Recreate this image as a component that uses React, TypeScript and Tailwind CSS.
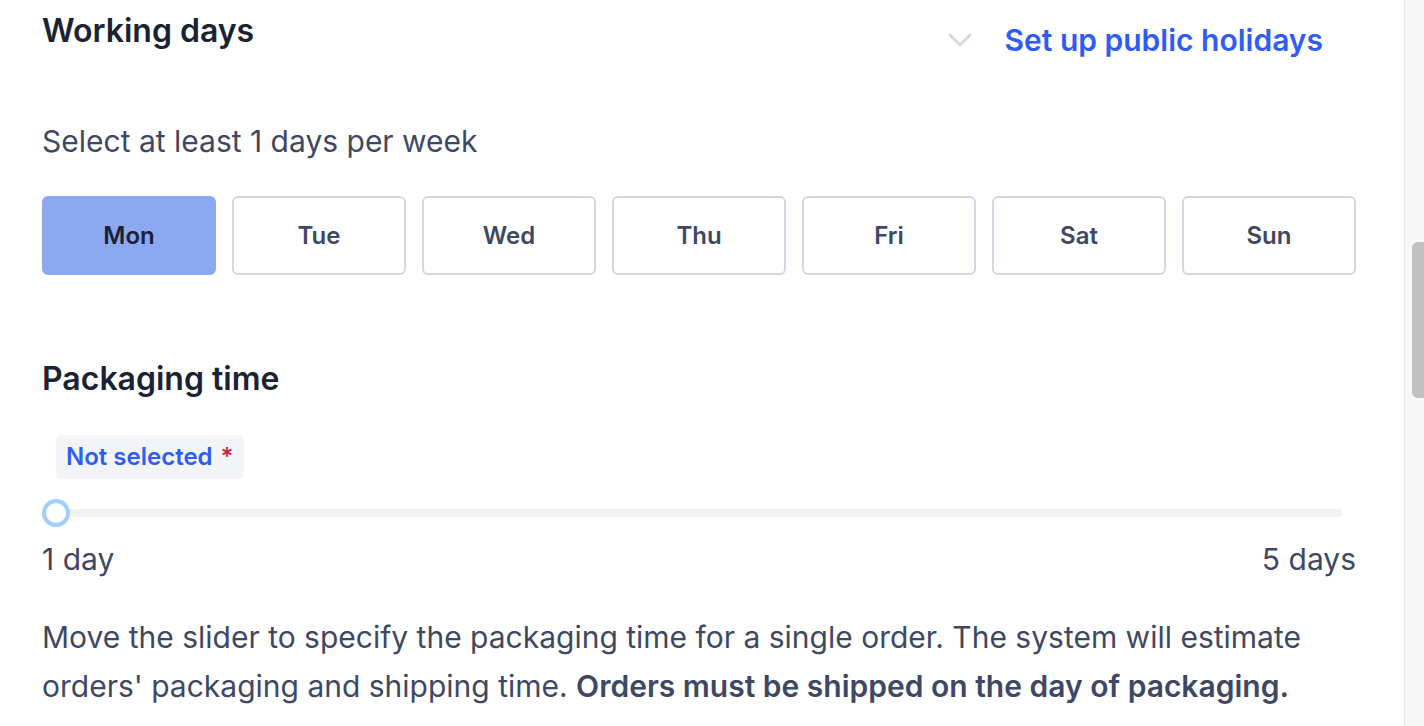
import React, { useState } from 'react';

const DAYS = ['Mon', 'Tue', 'Wed', 'Thu', 'Fri', 'Sat', 'Sun'];

export default function App() {
    const [selected, setSelected] = useState<string[]>(['Mon']);

    const toggle = (d: string) => {
        setSelected((s) => (s.includes(d) ? s.filter((x) => x !== d) : [...s, d]));
    };

    return (
        <div className="flex h-[726px] w-[1424px] overflow-hidden bg-white font-['Inter',sans-serif] text-[#3f4863]">
            <div className="flex-1 pl-[42px] pr-[48px]">
                {/* header */}
                <div className="flex items-start justify-between pt-[12px]">
                    <h2 className="text-[32px] font-semibold leading-[38px] text-[#1b2233]">Working days</h2>
                    <div className="mr-[33px] mt-[10px] flex items-center gap-[32px]">
                        <svg width="24" height="14" viewBox="0 0 24 14" fill="none">
                            <path d="M2 2l10 10L22 2" stroke="#d2d6e0" strokeWidth="2.5" strokeLinecap="round" strokeLinejoin="round" />
                        </svg>
                        <a className="text-[30px] font-semibold leading-[36px] text-[#2f5cf5]" href="#">Set up public holidays</a>
                    </div>
                </div>

                <p className="mt-[64px] text-[30px] leading-[38px]">Select at least 1 days per week</p>

                {/* days */}
                <div className="mt-[36px] grid grid-cols-7 gap-4">
                    {DAYS.map((d) => {
                        const on = selected.includes(d);
                        return (
                            <button
                                key={d}
                                onClick={() => toggle(d)}
                                className={
                                    on
                                        ? 'h-[79px] rounded-[6px] border-2 border-[#8ca8f2] bg-[#8ca8f2] text-[24px] font-semibold text-[#1b2233]'
                                        : 'h-[79px] rounded-[6px] border-2 border-[#d5d8e3] bg-white text-[24px] font-semibold text-[#3f4863]'
                                }
                            >
                                {d}
                            </button>
                        );
                    })}
                </div>

                {/* packaging */}
                <h2 className="mt-[85px] text-[32px] font-semibold leading-[38px] text-[#1b2233]">Packaging time</h2>

                <div className="ml-[14px] mt-[37px] inline-flex h-[44px] items-center rounded-[6px] bg-[#f3f4f7] px-[10px] text-[24px] font-semibold">
                    <span className="text-[#2f5cf5]">Not selected</span>
                    <span className="ml-[8px] text-[#d2243f]">*</span>
                </div>

                <div className="relative mt-[30px] h-[8px] w-[1300px] rounded-full bg-[#f2f2f3]">
                    <div className="absolute left-0 top-1/2 h-[28px] w-[28px] -translate-y-1/2 rounded-full border-[4px] border-[#a3cdfb] bg-white" />
                </div>

                <div className="mt-[23px] flex justify-between text-[30px] leading-[38px]">
                    <span>1 day</span>
                    <span>5 days</span>
                </div>

                <p className="mt-[35px] text-[30px] leading-[49px]">
                    Move the slider to specify the packaging time for a single order. The system will estimate orders' packaging and shipping time. <span className="font-semibold">Orders must be shipped on the day of packaging.</span>
                </p>
            </div>

            {/* scrollbar */}
            <div className="flex w-[20px] border-l border-[#e8e8e8] bg-[#f7f7f7] pl-[7px]">
                <div className="mt-[242px] h-[156px] w-full rounded-l-[6px] bg-[#c1c1c1]" />
            </div>
        </div>
    );
}
